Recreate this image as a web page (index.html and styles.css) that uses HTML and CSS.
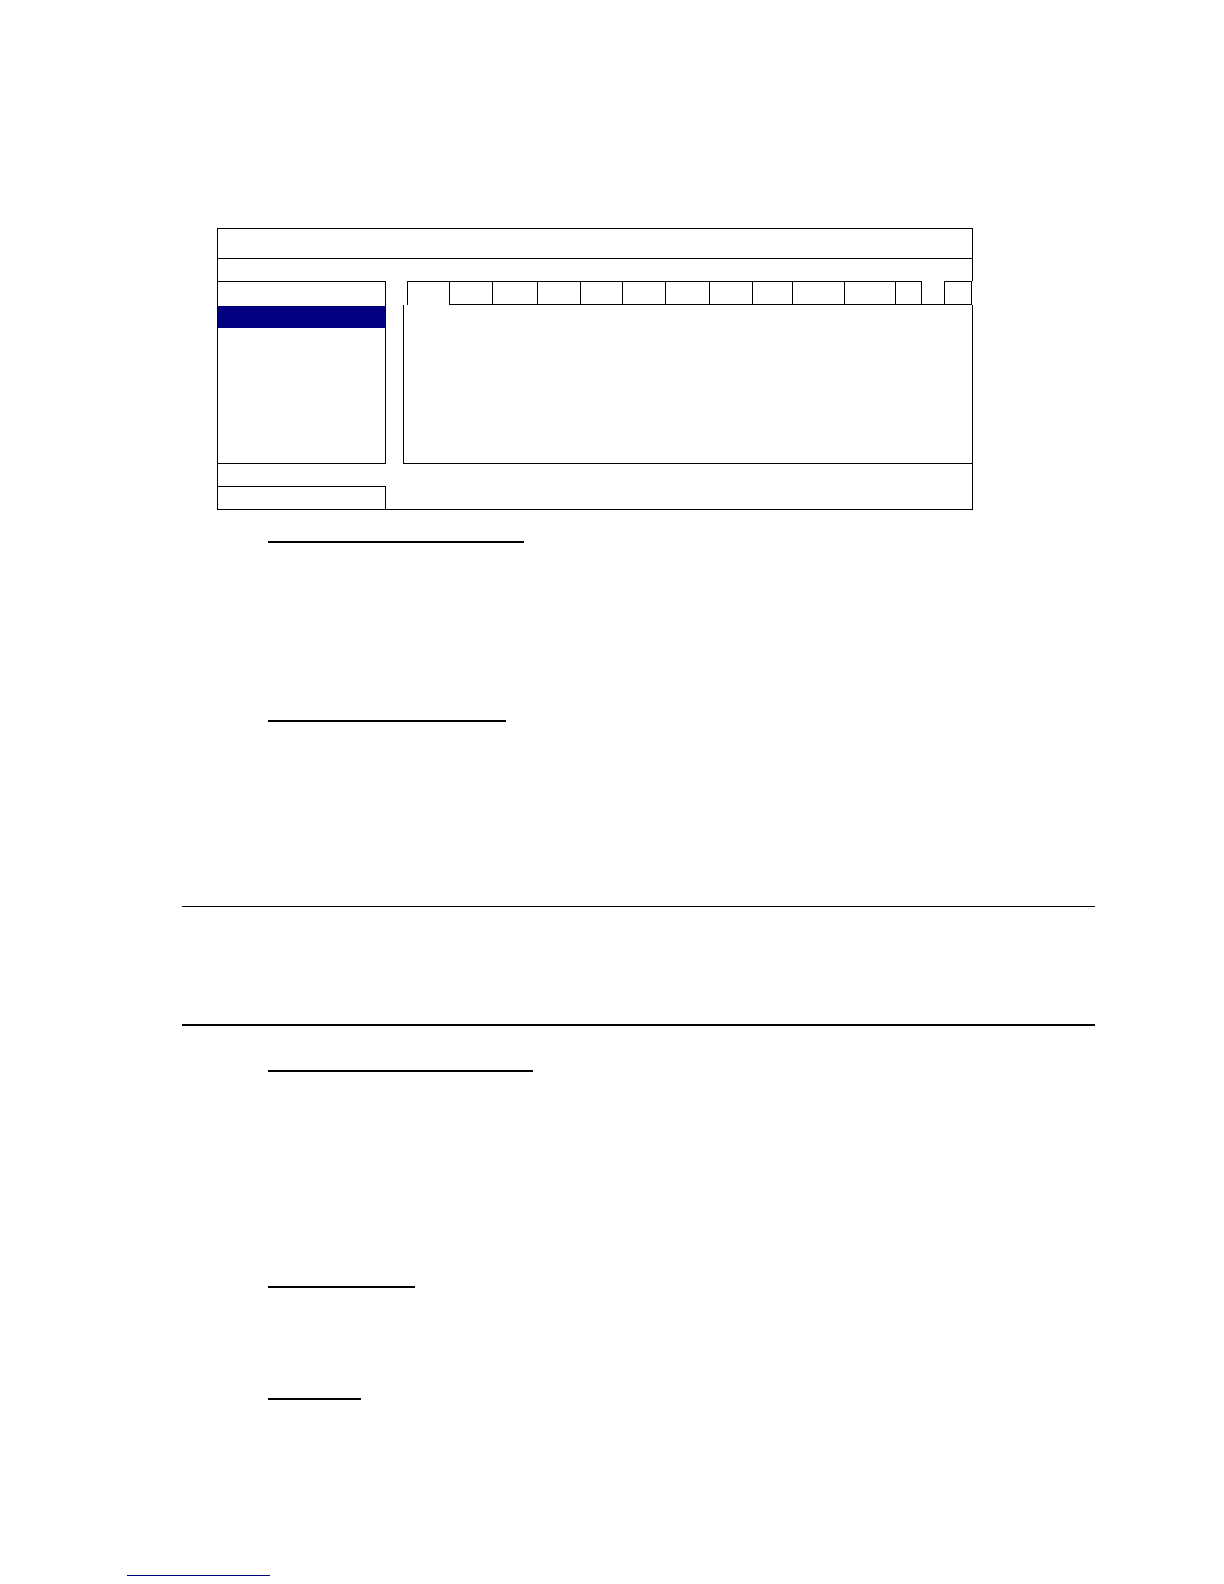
FILE: index.html
```html
<!DOCTYPE html>
<html lang="en">
<head>
<meta charset="utf-8">
<title>Manual page</title>
<link rel="stylesheet" href="styles.css">
</head>
<body>
<div class="page">
  <figure class="osd">
    <div class="osd-title"></div>
    <div class="osd-sub"></div>
    <div class="osd-main">
      <div class="menu">
        <div class="menu-head"></div>
        <div class="menu-item active"></div>
      </div>
      <div class="content">
        <div class="tabs">
          <div class="tab-spacer"></div>
          <div class="tab active"></div>
          <div class="tab"></div>
          <div class="tab"></div>
          <div class="tab"></div>
          <div class="tab"></div>
          <div class="tab"></div>
          <div class="tab"></div>
          <div class="tab"></div>
          <div class="tab"></div>
          <div class="tab"></div>
          <div class="tab"></div>
          <div class="tab closed"></div>
          <div class="tab-gap"></div>
          <div class="tab closed"></div>
        </div>
        <div class="panel"></div>
      </div>
    </div>
    <div class="osd-foot">
      <div class="foot-box"></div>
    </div>
  </figure>

  <h3 class="heading u1"></h3>
  <h3 class="heading u2"></h3>

  <hr class="rule rule-top">
  <hr class="rule rule-bottom">

  <h3 class="heading u3"></h3>
  <h3 class="heading u4"></h3>
  <h3 class="heading u5"></h3>

  <div class="footnote-link"></div>
</div>
</body>
</html>
```

FILE: styles.css
```css
* {
  box-sizing: border-box;
  margin: 0;
  padding: 0;
}

html,
body {
  background: #ffffff;
}

body {
  font-family: "Liberation Serif", serif;
  color: #000000;
}

.page {
  width: 1224px;
  min-height: 1584px;
  padding-top: 228px;
  display: flex;
  flex-direction: column;
  align-items: flex-start;
}

/* ---------- on-screen menu figure ---------- */
.osd {
  margin-left: 217px;
  width: 756px;
  border-left: 1px solid #000;
  display: flex;
  flex-direction: column;
}

.osd-title {
  height: 31px;
  border-top: 1px solid #000;
  border-right: 1px solid #000;
  border-bottom: 1px solid #000;
}

.osd-sub {
  height: 22px;
  border-right: 1px solid #000;
}

.osd-main {
  display: flex;
  height: 183px;
}

.menu {
  width: 168px;
  border-top: 1px solid #000;
  border-right: 1px solid #000;
  border-bottom: 1px solid #000;
  display: flex;
  flex-direction: column;
}

.menu-head {
  height: 24px;
}

.menu-item {
  height: 22px;
}

.menu-item.active {
  background: #000080;
}

.content {
  margin-left: 17px;
  flex: 1;
  display: flex;
  flex-direction: column;
}

.tabs {
  height: 24px;
  display: grid;
  grid-template-columns: 4px 42px 43px 45px 43px 42px 43px 44px 43px 40px 52px 51px 27px 22px 28px 1fr;
}

.tab {
  border-top: 1px solid #000;
  border-left: 1px solid #000;
  border-bottom: 1px solid #000;
}

.tab.active {
  border-bottom: none;
}

.tab.closed {
  border-right: 1px solid #000;
}

.tab-gap {
  border-bottom: 1px solid #000;
}

.panel {
  flex: 1;
  border-left: 1px solid #000;
  border-right: 1px solid #000;
  border-bottom: 1px solid #000;
}

.osd-foot {
  height: 46px;
  border-right: 1px solid #000;
  border-bottom: 1px solid #000;
  display: flex;
  flex-direction: column;
  justify-content: flex-end;
}

.foot-box {
  width: 168px;
  height: 23px;
  border-top: 1px solid #000;
  border-right: 1px solid #000;
}

/* ---------- headings (underlined) ---------- */
.heading {
  height: 0;
  margin-left: 268px;
  border-top: 2px solid #000;
}

.u1 {
  margin-top: 31px;
  width: 256px;
}

.u2 {
  margin-top: 177px;
  width: 238px;
}

.u3 {
  margin-top: 44px;
  width: 265px;
}

.u4 {
  margin-top: 214px;
  width: 147px;
}

.u5 {
  margin-top: 110px;
  width: 93px;
}

/* ---------- note rules ---------- */
.rule {
  height: 0;
  margin-left: 182px;
  width: 913px;
  border: none;
}

.rule-top {
  margin-top: 184px;
  border-top: 1px solid #000;
}

.rule-bottom {
  margin-top: 117px;
  border-top: 2px solid #000;
}

/* ---------- footnote link ---------- */
.footnote-link {
  margin-top: 175px;
  margin-left: 127px;
  width: 143px;
  height: 0;
  border-top: 1px solid #000080;
}
```
